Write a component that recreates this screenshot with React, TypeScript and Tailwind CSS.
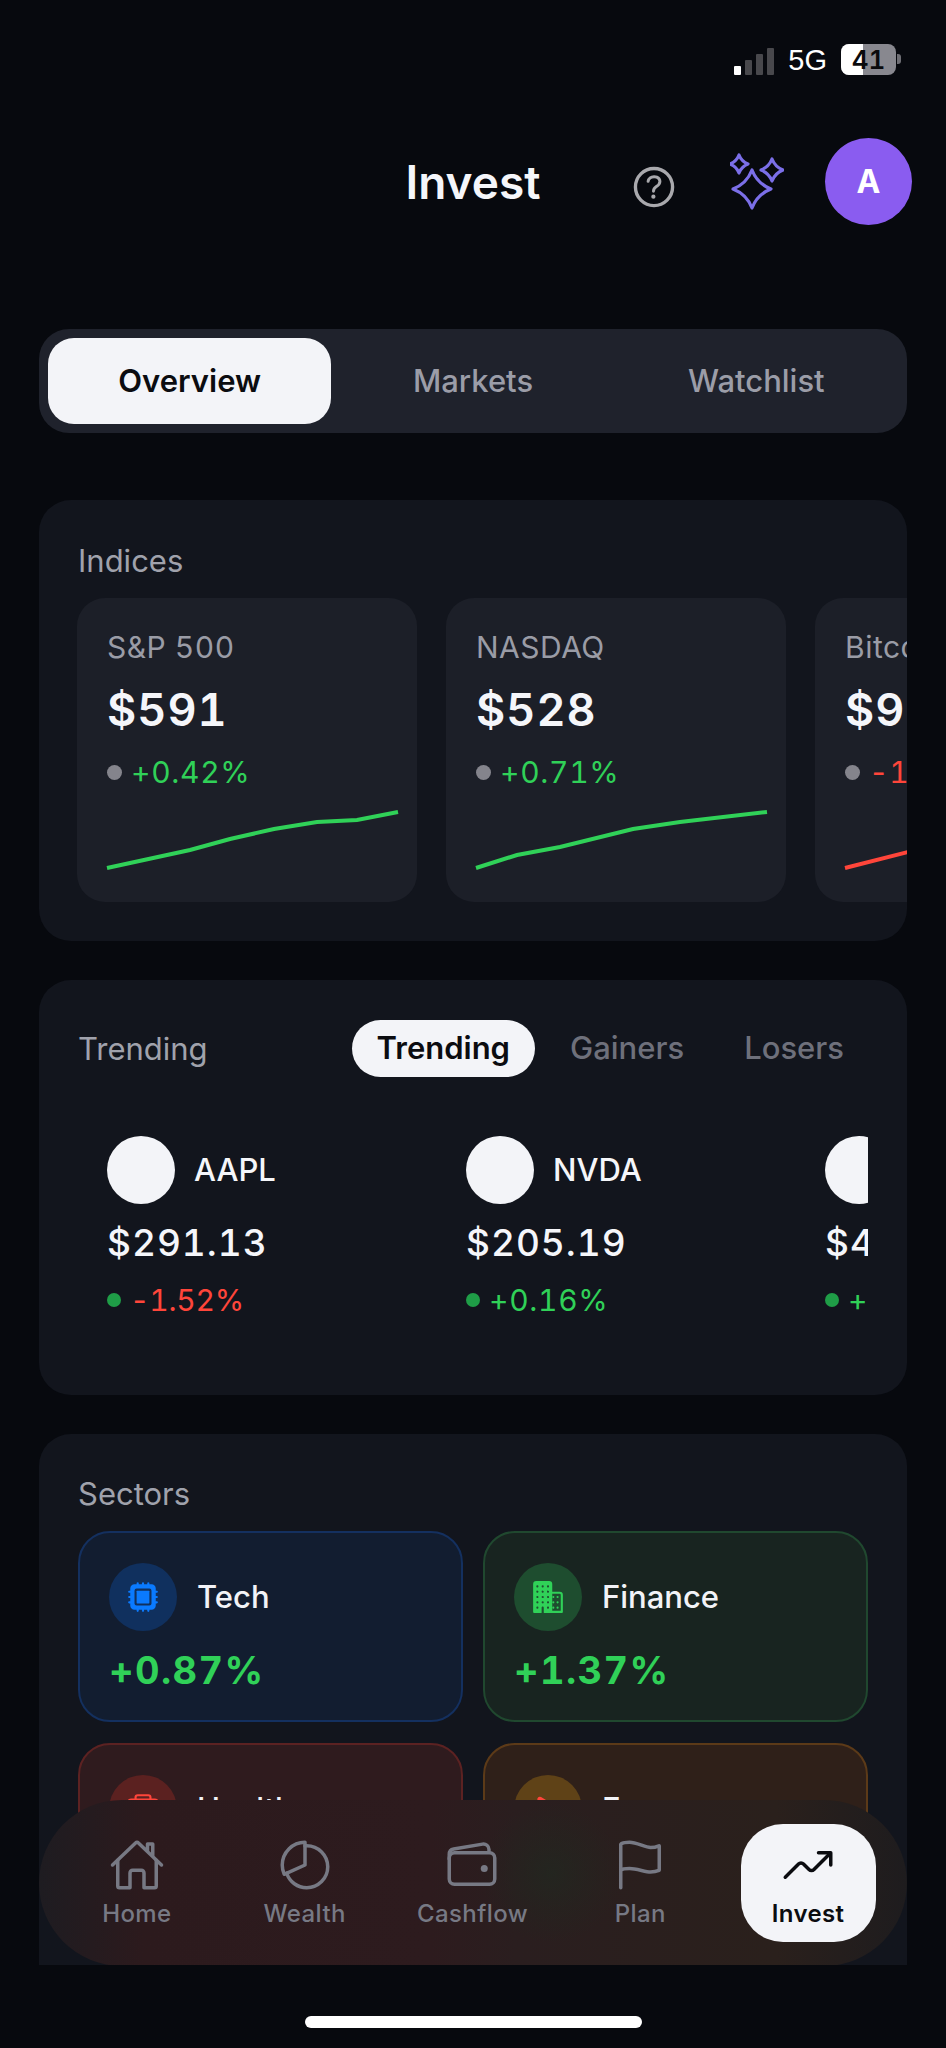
import React from "react";
import {
  IoHomeOutline,
  IoPieChartOutline,
  IoWalletOutline,
  IoFlagOutline,
  IoTrendingUp,
  IoHelpCircleOutline,
  IoHardwareChip,
  IoBusiness,
  IoMedkit,
  IoPlay,
} from "react-icons/io5";

const indices = [
  { name: "S&P 500", price: "$591", change: "+0.42%", color: "#30d158", line: "0,56 83,38 123,27 167,17 210,10 250,8 291,0" },
  { name: "NASDAQ", price: "$528", change: "+0.71%", color: "#30d158", line: "0,56 41,43 84,35 157,17 204,10 291,0" },
  { name: "Bitcoin", price: "$91,204", change: "-1.28%", color: "#ff453a", line: "0,56 63,40 130,30 200,22 291,10" },
];

const stocks = [
  { sym: "AAPL", price: "$291.13", change: "-1.52%", color: "text-[#ff453a] tracking-[-0.2px]" },
  { sym: "NVDA", price: "$205.19", change: "+0.16%", color: "text-[#30d158] tracking-[0.7px]" },
  { sym: "MSFT", price: "$478.53", change: "+0.31%", color: "text-[#30d158] tracking-[0.7px]" },
];

function Star({ cx, cy, r }: { cx: number; cy: number; r: number }) {
  const k = r * 0.28;
  return (
    <path
      d={`M${cx} ${cy - r}Q${cx + k} ${cy - k} ${cx + r} ${cy}Q${cx + k} ${cy + k} ${cx} ${cy + r}Q${cx - k} ${cy + k} ${cx - r} ${cy}Q${cx - k} ${cy - k} ${cx} ${cy - r}Z`}
    />
  );
}

function Tile({
  name,
  pct,
  tile,
  circle,
  icon,
}: {
  name: string;
  pct: string;
  tile: string;
  circle: string;
  icon: React.ReactNode;
}) {
  return (
    <div className={`h-[191px] rounded-[32px] border-2 pl-[29px] pt-[30px] ${tile}`}>
      <div className="flex items-center gap-5">
        <div className={`flex h-[68px] w-[68px] items-center justify-center rounded-full ${circle}`}>{icon}</div>
        <span className="text-[31px] leading-9 font-medium text-[#f2f3f7]">{name}</span>
      </div>
      <div className="mt-[17px] text-[38px] leading-[44px] font-bold tracking-[1.4px] text-[#30d158] tabular-nums">{pct}</div>
    </div>
  );
}

function NavItem({ label, icon }: { label: string; icon: React.ReactNode }) {
  return (
    <div className="flex h-[118px] flex-col items-center justify-end pb-[14px] text-[#777984]">
      {icon}
      <span className="mt-[7px] text-[24px] leading-7 font-medium tracking-[0.4px]">{label}</span>
    </div>
  );
}

export default function App() {
  return (
    <div className="h-[2048px] w-[946px] overflow-hidden bg-[#07090e] font-['Inter',sans-serif]">
      <div className="relative h-[1965px] overflow-hidden">
        {/* status bar */}
        <div className="flex h-[138px] items-start justify-end pt-[42px] pr-[45px]">
          <div className="flex h-[36px] items-end gap-[4px] pb-[3px]">
            <div className="h-[9px] w-[7px] rounded-[1px] bg-white" />
            <div className="h-[15px] w-[7px] rounded-[1px] bg-[#48484c]" />
            <div className="h-[21px] w-[7px] rounded-[1px] bg-[#48484c]" />
            <div className="h-[27px] w-[7px] rounded-[1px] bg-[#48484c]" />
          </div>
          <span className="ml-[14px] font-['Liberation_Sans',sans-serif] text-[29px] leading-9 text-white">5G</span>
          <div className="ml-[14px] flex items-center">
            <div className="relative mt-[2px] flex h-[31px] w-[55px] items-center justify-center overflow-hidden rounded-[8px] bg-[#88888f]">
              <div className="absolute inset-y-0 left-0 w-[22px] bg-white" />
              <span className="relative text-[26px] leading-none font-semibold text-[#0a0a0c] tabular-nums">41</span>
            </div>
            <div className="ml-[1px] h-[10px] w-[4px] rounded-r-[3px] bg-[#6f6f75]" />
          </div>
        </div>

        {/* header */}
        <div className="grid h-[87px] grid-cols-3 items-center">
          <div />
          <h1 className="text-center text-[46px] leading-[56px] font-semibold text-[#f5f6fa]">Invest</h1>
          <div className="flex items-center justify-end pr-[34px]">
            <IoHelpCircleOutline className="mt-[10px] h-[54px] w-[54px] shrink-0 text-[#a9a9ad]" />
            <svg
              className="mr-[41px] ml-[49px] h-[60px] w-[54px] shrink-0"
              viewBox="0 0 54 60"
              fill="none"
              stroke="#7b6fe8"
              strokeWidth="3.2"
              strokeLinejoin="round"
            >
              <Star cx={22} cy={37} r={19} />
              <Star cx={9} cy={12} r={9} />
              <Star cx={42} cy={18} r={11} />
            </svg>
            <div className="flex h-[87px] w-[87px] shrink-0 items-center justify-center rounded-full bg-[#8a5cf0] text-[32px] font-bold text-white">
              A
            </div>
          </div>
        </div>

        <div className="px-[39px]">
          {/* segmented */}
          <div className="mt-[104px] flex h-[104px] items-center rounded-[30px] bg-[#1f222c] px-[9px]">
            <div className="flex h-[86px] flex-1 items-center justify-center rounded-[26px] bg-[#f3f4f8] text-[31px] font-semibold text-[#0b0c10]">
              Overview
            </div>
            <div className="flex h-[86px] flex-1 items-center justify-center text-[31px] font-medium text-[#9b9da8]">
              Markets
            </div>
            <div className="flex h-[86px] flex-1 items-center justify-center text-[31px] font-medium text-[#9b9da8]">
              Watchlist
            </div>
          </div>

          {/* indices */}
          <section className="mt-[67px] h-[441px] overflow-hidden rounded-[32px] bg-[#12151d] pt-[43px] pl-[38px]">
            <h2 className="ml-px text-[31px] leading-9 text-[#a0a2ac]">Indices</h2>
            <div className="mt-[19px] flex gap-[29px]">
              {indices.map((x) => (
                <div key={x.name} className="h-[304px] w-[340px] shrink-0 rounded-[28px] bg-[#1c1f28] pt-[31px] pl-[30px]">
                  <div className="text-[30px] leading-9 tracking-[0.5px] text-[#9a9ca6] tabular-nums">{x.name}</div>
                  <div className="mt-[18px] text-[45px] leading-[54px] font-semibold tracking-[1px] text-[#f5f6fa] tabular-nums">{x.price}</div>
                  <div className="mt-[17px] flex items-center gap-[9px]">
                    <span className="h-[15px] w-[15px] rounded-full bg-[#84848c]" />
                    <span className="text-[30px] leading-9 tracking-[0.7px] tabular-nums" style={{ color: x.color }}>
                      {x.change}
                    </span>
                  </div>
                  <svg className="mt-[20px] h-[60px] w-[291px] overflow-visible" viewBox="0 -2 291 60" fill="none">
                    <polyline points={x.line} stroke={x.color} strokeWidth="4" />
                  </svg>
                </div>
              ))}
            </div>
          </section>

          {/* trending */}
          <section className="mt-[39px] h-[415px] rounded-[32px] bg-[#12151d] px-[39px] pt-[40px]">
            <div className="flex h-[57px] items-center justify-between">
              <h2 className="text-[31px] leading-9 text-[#a0a2ac]">Trending</h2>
              <div className="flex items-center text-[31px] font-medium text-[#6e707b]">
                <div className="flex h-[57px] items-center rounded-full bg-[#f3f4f8] px-[25px] font-semibold text-[#0b0c10]">Trending</div>
                <div className="ml-[35px]">Gainers</div>
                <div className="mr-[24px] ml-[60px]">Losers</div>
              </div>
            </div>
            <div className="mt-[59px] flex overflow-hidden pl-[29px]">
              {stocks.map((s) => (
                <div key={s.sym} className="w-[359px] shrink-0">
                  <div className="flex items-center gap-[19px]">
                    <div className="h-[68px] w-[68px] shrink-0 rounded-full bg-[#f3f4f8]" />
                    <span className="text-[31px] leading-9 font-medium text-[#f5f6fa]">{s.sym}</span>
                  </div>
                  <div className="mt-[17px] text-[37px] leading-[44px] font-medium tracking-[1px] text-[#f5f6fa] tabular-nums">{s.price}</div>
                  <div className="mt-[17px] flex items-center gap-[9px]">
                    <span className="h-[14px] w-[14px] rounded-full bg-[#1f9d47]" />
                    <span className={`text-[30px] leading-9 tabular-nums ${s.color}`}>{s.change}</span>
                  </div>
                </div>
              ))}
            </div>
          </section>

          {/* sectors */}
          <section className="mt-[39px] h-[640px] rounded-[32px] bg-[#12151d] px-[39px] pt-[42px]">
            <h2 className="text-[31px] leading-9 text-[#a0a2ac]">Sectors</h2>
            <div className="mt-[19px] grid grid-cols-2 gap-x-[20px] gap-y-[21px]">
              <Tile
                name="Tech"
                pct="+0.87%"
                tile="border-[#14305f] bg-[#121d30]"
                circle="bg-[#10305e]"
                icon={<IoHardwareChip className="h-[34px] w-[34px] text-[#0a7aff]" />}
              />
              <Tile
                name="Finance"
                pct="+1.37%"
                tile="border-[#20482f] bg-[#182420]"
                circle="bg-[#1e4d2f]"
                icon={<IoBusiness className="h-[34px] w-[34px] text-[#30d158]" />}
              />
              <Tile
                name="Health"
                pct="-0.24%"
                tile="border-[#5c2222] bg-[#2f1b1e]"
                circle="bg-[#5b2120]"
                icon={<IoMedkit className="h-[34px] w-[34px] text-[#ff453a]" />}
              />
              <Tile
                name="Energy"
                pct="-0.41%"
                tile="border-[#5c3a18] bg-[#2f2019]"
                circle="bg-[#5f4217]"
                icon={<IoPlay className="h-[34px] w-[34px] text-[#ff453a]" />}
              />
            </div>
          </section>
        </div>

        {/* bottom nav */}
        <nav className="absolute inset-x-[39px] top-[1800px] grid h-[166px] grid-cols-5 items-center rounded-[83px] bg-[radial-gradient(ellipse_70px_70px_at_59%_44%,#1f2a2099,transparent),linear-gradient(90deg,#1e1c21_0%,#2c1a1d_12%,#2d1b1e_45%,#2a1e1f_55%,#2a201c_85%,#1e1c1e_100%)] pr-[15px] pl-[14px]">
          <NavItem label="Home" icon={<IoHomeOutline className="h-[56px] w-[56px]" />} />
          <NavItem label="Wealth" icon={<IoPieChartOutline className="h-[56px] w-[56px]" />} />
          <NavItem label="Cashflow" icon={<IoWalletOutline className="h-[56px] w-[56px]" />} />
          <NavItem label="Plan" icon={<IoFlagOutline className="h-[56px] w-[56px]" />} />
          <div className="mx-auto flex h-[118px] w-[135px] flex-col items-center justify-end rounded-[42px] bg-[#f3f4f8] pb-[14px] text-[#0b0c10]">
            <IoTrendingUp className="h-[56px] w-[56px]" />
            <span className="mt-[7px] text-[24px] leading-7 font-semibold tracking-[0.4px]">Invest</span>
          </div>
        </nav>
      </div>

      {/* home indicator */}
      <div className="flex justify-center pt-[51px]">
        <div className="h-[12px] w-[337px] rounded-full bg-white" />
      </div>
    </div>
  );
}
